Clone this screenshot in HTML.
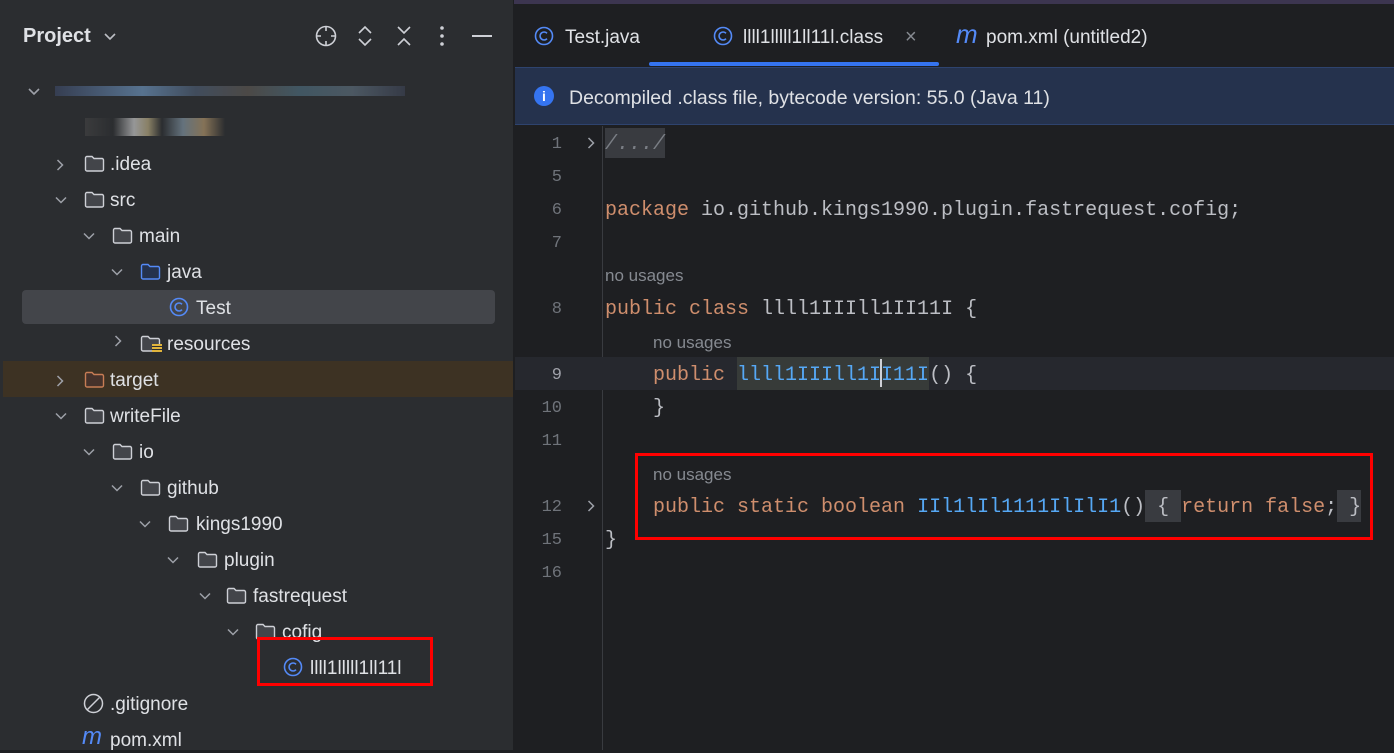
<!DOCTYPE html>
<html><head><meta charset="utf-8">
<style>
*{margin:0;padding:0;box-sizing:border-box}
body{width:1394px;height:750px;overflow:hidden;background:#1e1f22;font-family:"Liberation Sans",sans-serif;position:relative;color:#dfe1e5}
.a{position:absolute;white-space:pre}
#side{position:absolute;left:0;top:0;width:514px;height:750px;background:#2b2d30;border-right:1px solid #1e1f22}
.t{position:absolute;font-size:19px;color:#dfe1e5;line-height:24px;margin-top:2px}
.code{position:absolute;font-family:"Liberation Mono",monospace;font-size:20px;line-height:24px;white-space:pre;color:#bcbec4;margin-top:2px}
.k{color:#cf8e6d}.f{color:#56a8f5}
.nu{position:absolute;font-size:17px;color:#868a91;line-height:20px;margin-top:1px}
.ln{position:absolute;width:50px;text-align:right;left:512px;font-family:"Liberation Mono",monospace;font-size:17px;color:#6f737a;line-height:20px;margin-top:1px}
</style></head><body>
<div style="position:absolute;left:0;top:0;width:1394px;height:4px;background:#3c3550"></div>
<div id="side">
<div class="t" style="left:23px;top:22px;font-size:20px;font-weight:600;color:#dfe1e5">Project</div>
<svg class="a" style="left:103px;top:32px" width="14" height="9"><path d="M2 2l5 5 5-5" stroke="#bcbec4" stroke-width="1.6" fill="none"/></svg>
<svg class="a" style="left:314px;top:24px" width="24" height="24"><circle cx="12" cy="12" r="9.5" stroke="#ced0d6" stroke-width="1.6" fill="none"/><path d="M12 2v5M12 17v5M2 12h5M17 12h5" stroke="#ced0d6" stroke-width="1.6"/></svg>
<svg class="a" style="left:356px;top:25px" width="18" height="22"><path d="M3 8l6-6 6 6M3 14l6 6 6-6" stroke="#ced0d6" stroke-width="1.6" fill="none"/></svg>
<svg class="a" style="left:395px;top:25px" width="18" height="22"><path d="M3 2l6 6 6-6M3 20l6-6 6 6" stroke="#ced0d6" stroke-width="1.6" fill="none"/></svg>
<svg class="a" style="left:437px;top:25px" width="10" height="22"><circle cx="5" cy="3" r="1.8" fill="#ced0d6"/><circle cx="5" cy="11" r="1.8" fill="#ced0d6"/><circle cx="5" cy="19" r="1.8" fill="#ced0d6"/></svg>
<div class="a" style="left:472px;top:35px;width:20px;height:2px;background:#ced0d6"></div>

<svg class="a" style="left:27px;top:87px" width="14" height="9"><path d="M2 2l5 5 5-5" stroke="#9da0a8" stroke-width="1.6" fill="none"/></svg>
<div class="a" style="left:55px;top:86px;width:350px;height:10px;background:linear-gradient(90deg,#3a4560,#6a90b8 25%,#4a5a70 40%,#5a5550 55%,#4a6878 70%,#5a6a78 85%,#3a4050);opacity:.7"></div>
<div class="a" style="left:85px;top:118px;width:140px;height:18px;background:linear-gradient(90deg,#454545,#2b2d30 20%,#ddd 35%,#c8b88a 45%,#2b2d30 55%,#8aa0b0 70%,#c0a070 85%,#2b2d30);opacity:.6"></div>

<div class="a" style="left:22px;top:290px;width:473px;height:34px;background:#43454a;border-radius:4px"></div>
<div class="a" style="left:3px;top:361px;width:510px;height:36px;background:#3d3223"></div>
</div>

<svg width="0" height="0" style="position:absolute"><defs>
<symbol id="cd" viewBox="0 0 12 8"><path d="M1 1.5l5 5 5-5" stroke="#9da0a8" stroke-width="1.5" fill="none"/></symbol>
<symbol id="cr" viewBox="0 0 8 12"><path d="M1.5 1l5 5-5 5" stroke="#9da0a8" stroke-width="1.5" fill="none"/></symbol>
<symbol id="fo" viewBox="0 0 21 17"><path d="M1.5 3a1.5 1.5 0 0 1 1.5-1.5h5l2 2h8a1.5 1.5 0 0 1 1.5 1.5v9.5a1.5 1.5 0 0 1-1.5 1.5h-15a1.5 1.5 0 0 1-1.5-1.5z" stroke="#ced0d6" stroke-width="1.4" fill="#43454a"/></symbol>
<symbol id="fb" viewBox="0 0 21 17"><path d="M1.5 3a1.5 1.5 0 0 1 1.5-1.5h5l2 2h8a1.5 1.5 0 0 1 1.5 1.5v9.5a1.5 1.5 0 0 1-1.5 1.5h-15a1.5 1.5 0 0 1-1.5-1.5z" stroke="#548af7" stroke-width="1.4" fill="#25324d"/></symbol>
<symbol id="fr" viewBox="0 0 21 17"><path d="M1.5 3a1.5 1.5 0 0 1 1.5-1.5h5l2 2h8a1.5 1.5 0 0 1 1.5 1.5v9.5a1.5 1.5 0 0 1-1.5 1.5h-15a1.5 1.5 0 0 1-1.5-1.5z" stroke="#c77d55" stroke-width="1.4" fill="#45322b"/></symbol>
<symbol id="cc" viewBox="0 0 20 20"><circle cx="10" cy="10" r="8.5" stroke="#548af7" stroke-width="1.6" fill="none"/><path d="M13 7.3a4 4 0 1 0 0 5.4" stroke="#548af7" stroke-width="1.6" fill="none"/></symbol>
</defs></svg>

<svg class="a" style="left:56px;top:159px" width="8" height="12"><use href="#cr"/></svg><svg class="a" style="left:84px;top:155px" width="21" height="17"><use href="#fo"/></svg><div class="t" style="left:110px;top:151px">.idea</div>
<svg class="a" style="left:55px;top:196px" width="12" height="8"><use href="#cd"/></svg><svg class="a" style="left:84px;top:191px" width="21" height="17"><use href="#fo"/></svg><div class="t" style="left:110px;top:187px">src</div>
<svg class="a" style="left:83px;top:232px" width="12" height="8"><use href="#cd"/></svg><svg class="a" style="left:112px;top:227px" width="21" height="17"><use href="#fo"/></svg><div class="t" style="left:139px;top:223px">main</div>
<svg class="a" style="left:111px;top:268px" width="12" height="8"><use href="#cd"/></svg><svg class="a" style="left:140px;top:263px" width="21" height="17"><use href="#fb"/></svg><div class="t" style="left:167px;top:259px">java</div>
<svg class="a" style="left:169px;top:297px" width="20" height="20"><use href="#cc"/></svg><div class="t" style="left:196px;top:295px">Test</div>
<svg class="a" style="left:114px;top:335px" width="8" height="12"><use href="#cr"/></svg><svg class="a" style="left:140px;top:335px" width="21" height="17"><use href="#fo"/></svg><div class="a" style="left:152px;top:344px;width:10px;height:9px;background:repeating-linear-gradient(#e0b43c 0 2px,#2b2d30 2px 3px)"></div><div class="t" style="left:167px;top:331px">resources</div>
<svg class="a" style="left:56px;top:375px" width="8" height="12"><use href="#cr"/></svg><svg class="a" style="left:84px;top:371px" width="21" height="17"><use href="#fr"/></svg><div class="t" style="left:110px;top:367px">target</div>
<svg class="a" style="left:55px;top:412px" width="12" height="8"><use href="#cd"/></svg><svg class="a" style="left:84px;top:407px" width="21" height="17"><use href="#fo"/></svg><div class="t" style="left:110px;top:403px">writeFile</div>
<svg class="a" style="left:83px;top:448px" width="12" height="8"><use href="#cd"/></svg><svg class="a" style="left:112px;top:443px" width="21" height="17"><use href="#fo"/></svg><div class="t" style="left:139px;top:439px">io</div>
<svg class="a" style="left:111px;top:484px" width="12" height="8"><use href="#cd"/></svg><svg class="a" style="left:140px;top:479px" width="21" height="17"><use href="#fo"/></svg><div class="t" style="left:167px;top:475px">github</div>
<svg class="a" style="left:139px;top:520px" width="12" height="8"><use href="#cd"/></svg><svg class="a" style="left:168px;top:515px" width="21" height="17"><use href="#fo"/></svg><div class="t" style="left:196px;top:511px">kings1990</div>
<svg class="a" style="left:167px;top:556px" width="12" height="8"><use href="#cd"/></svg><svg class="a" style="left:197px;top:551px" width="21" height="17"><use href="#fo"/></svg><div class="t" style="left:224px;top:547px">plugin</div>
<svg class="a" style="left:199px;top:592px" width="12" height="8"><use href="#cd"/></svg><svg class="a" style="left:226px;top:587px" width="21" height="17"><use href="#fo"/></svg><div class="t" style="left:253px;top:583px">fastrequest</div>
<svg class="a" style="left:227px;top:628px" width="12" height="8"><use href="#cd"/></svg><svg class="a" style="left:255px;top:623px" width="21" height="17"><use href="#fo"/></svg><div class="t" style="left:282px;top:619px">cofig</div>
<svg class="a" style="left:283px;top:657px" width="20" height="20"><use href="#cc"/></svg><div class="t" style="left:310px;top:655px">llll1lllll1ll11l</div>
<div class="a" style="left:257px;top:637px;width:176px;height:49px;border:3px solid #f00"></div>
<svg class="a" style="left:83px;top:693px" width="21" height="21"><circle cx="10.5" cy="10.5" r="9" stroke="#ced0d6" stroke-width="1.5" fill="none"/><path d="M4.5 16.5l12-12" stroke="#ced0d6" stroke-width="1.5"/></svg><div class="t" style="left:110px;top:691px">.gitignore</div>
<div class="t" style="left:82px;top:723px;font-size:24px;font-style:italic;color:#548af7">m</div><div class="t" style="left:110px;top:727px">pom.xml</div>

<svg class="a" style="left:534px;top:26px" width="20" height="20"><use href="#cc"/></svg><div class="t" style="left:565px;top:24px;color:#dfe1e5">Test.java</div>
<svg class="a" style="left:713px;top:26px" width="20" height="20"><use href="#cc"/></svg><div class="t" style="left:743px;top:24px;color:#dfe1e5">llll1lllll1ll11l.class</div>
<div class="t" style="left:905px;top:23px;color:#868a91;font-size:20px">×</div>
<div class="a" style="left:649px;top:62px;width:290px;height:4px;background:#3574f0;border-radius:2px"></div>
<div class="t" style="left:956px;top:20px;font-size:26px;font-style:italic;color:#548af7">m</div><div class="t" style="left:986px;top:24px;color:#dfe1e5">pom.xml (untitled2)</div>
<div class="a" style="left:515px;top:67px;width:879px;height:58px;background:#25324d;border-top:1px solid #2e436e;border-bottom:1px solid #2e436e"></div>
<div class="a" style="left:534px;top:86px;width:20px;height:20px;border-radius:50%;background:#3574f0;color:#fff;font-size:14px;font-weight:bold;text-align:center;line-height:20px">i</div>
<div class="t" style="left:569px;top:84px;font-size:19.5px;color:#dfe1e5">Decompiled .class file, bytecode version: 55.0 (Java 11)</div>

<div class="a" style="left:602px;top:126px;width:1px;height:624px;background:#393b40"></div>
<div class="a" style="left:515px;top:357px;width:879px;height:33px;background:#26282e"></div>
<div class="ln" style="top:134px">1</div><div class="ln" style="top:167px">5</div><div class="ln" style="top:200px">6</div><div class="ln" style="top:233px">7</div><div class="ln" style="top:299px">8</div><div class="ln" style="top:365px;color:#a1a3ab">9</div><div class="ln" style="top:398px">10</div><div class="ln" style="top:431px">11</div><div class="ln" style="top:497px">12</div><div class="ln" style="top:530px">15</div><div class="ln" style="top:563px">16</div>
<svg class="a" style="left:587px;top:137px" width="8" height="12"><use href="#cr"/></svg>
<svg class="a" style="left:587px;top:500px" width="8" height="12"><use href="#cr"/></svg>

<div class="a" style="left:605px;top:128px;width:60px;height:30px;background:#393b40"></div>
<div class="code" style="left:605px;top:131px;color:#7a7e85;font-style:italic">/.../</div>
<div class="code" style="left:605px;top:197px"><span class="k">package</span> io.github.kings1990.plugin.fastrequest.cofig;</div>
<div class="nu" style="left:605px;top:265px">no usages</div>
<div class="code" style="left:605px;top:296px"><span class="k">public class</span> llll1IIIll1II11I {</div>
<div class="nu" style="left:653px;top:332px">no usages</div>
<div class="a" style="left:737px;top:357px;width:192px;height:33px;background:#373b39"></div>
<div class="code" style="left:653px;top:362px"><span class="k">public</span> <span class="f">llll1IIIll1II11I</span>() {</div>
<div class="a" style="left:880px;top:359px;width:2px;height:28px;background:#ced0d6"></div>
<div class="code" style="left:653px;top:395px">}</div>
<div class="nu" style="left:653px;top:464px">no usages</div>
<div class="a" style="left:1145px;top:490px;width:36px;height:32px;background:#393b40"></div>
<div class="a" style="left:1337px;top:490px;width:24px;height:32px;background:#393b40"></div>
<div class="code" style="left:653px;top:494px"><span class="k">public static boolean</span> <span class="f">IIl1lIl1111IlIlI1</span>() { <span class="k">return false</span>; }</div>
<div class="code" style="left:605px;top:527px">}</div>
<div class="a" style="left:635px;top:453px;width:738px;height:87px;border:3px solid #f00"></div>
</body></html>
